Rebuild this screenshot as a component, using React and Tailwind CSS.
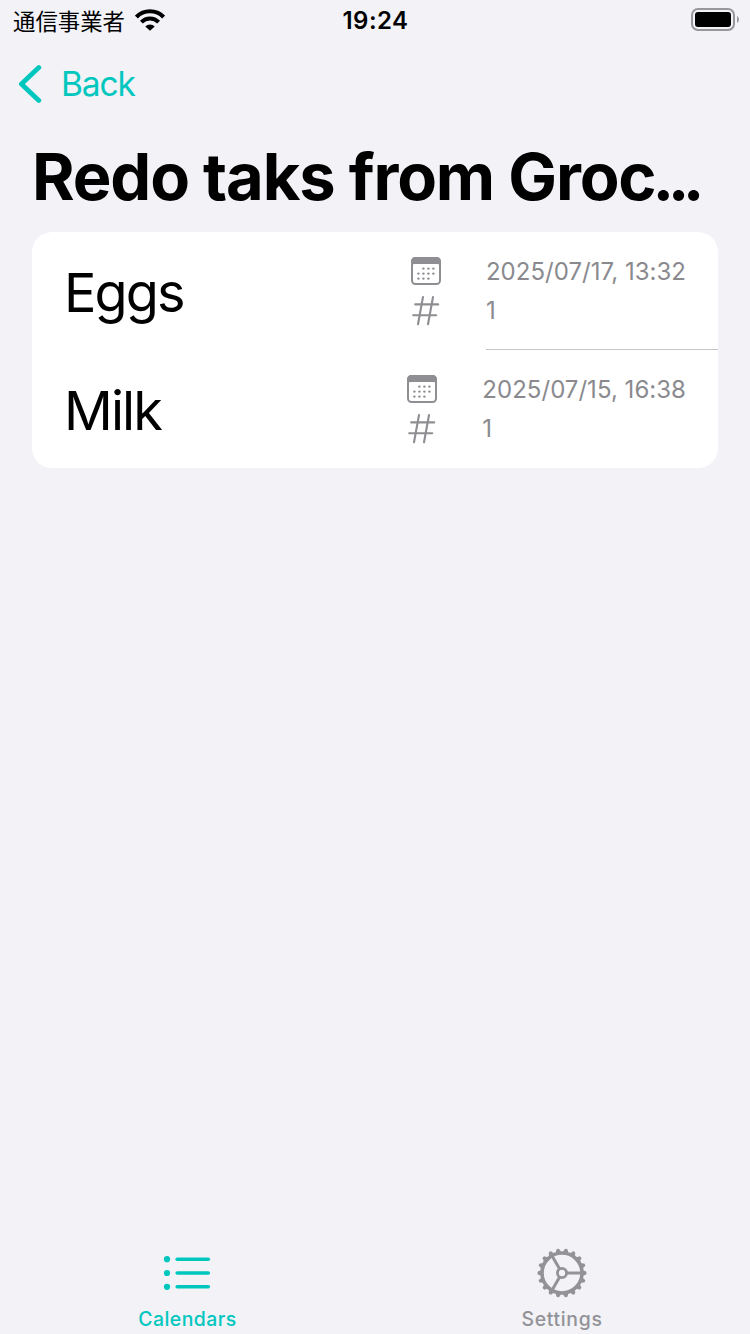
import { useState } from 'react'

const tasks = [
  { id: 1, name: 'Eggs', date: '2025/07/17, 13:32', count: 1 },
  { id: 2, name: 'Milk', date: '2025/07/15, 16:38', count: 1 },
]

const calendarDots = [
  [12.4, 11.6], [17.4, 11.6], [22.4, 11.6],
  [7.4, 16.6], [12.4, 16.6], [17.4, 16.6], [22.4, 16.6],
  [7.4, 21.6], [12.4, 21.6], [17.4, 21.6],
]

const gearTeeth = Array.from({ length: 18 }, (_, i) => i * 20)

function WifiIcon() {
  return (
    <svg width="30" height="22" viewBox="0 0 30 22" fill="none" stroke="black">
      <path d="M1.4 8A19 19 0 0 1 28.6 8" strokeWidth="4.2" />
      <path d="M6.4 13.2A12 12 0 0 1 23.6 13.2" strokeWidth="4" />
      <path d="M15 21.8L10.3 17.4A6.6 6.6 0 0 1 19.7 17.4Z" fill="black" stroke="none" />
    </svg>
  )
}

function BatteryIcon() {
  return (
    <svg width="49" height="23" viewBox="0 0 49 23" fill="none">
      <rect x="1" y="1" width="42" height="21" rx="6" stroke="#98989b" strokeWidth="2" />
      <rect x="4" y="4" width="36" height="15" rx="3" fill="black" />
      <path d="M46 8C48.6 9.5 48.6 13.5 46 15Z" fill="#98989b" />
    </svg>
  )
}

function CalendarIcon() {
  return (
    <svg width="30" height="28" viewBox="0 0 30 28" fill="none">
      <rect x="1" y="1" width="28" height="26" rx="3.5" stroke="#8e8e93" strokeWidth="2" />
      <path d="M0 8V4.5A4.5 4.5 0 0 1 4.5 0H25.5A4.5 4.5 0 0 1 30 4.5V8H28.5Q28 7 26.5 7H3.5Q2 7 1.5 8Z" fill="#8e8e93" />
      {calendarDots.map(([x, y]) => (
        <circle key={`${x}-${y}`} cx={x} cy={y} r="1.2" fill="#8e8e93" />
      ))}
    </svg>
  )
}

function NumberIcon() {
  return (
    <svg width="30" height="32" viewBox="0 0 30 32" fill="none" stroke="#8e8e93" strokeWidth="2.1" strokeLinecap="round">
      <path d="M4.2 10.4H27.2M2.2 21.3H25.2M12 3L7 30.2M22 3L17 30.2" />
    </svg>
  )
}

function ListIcon() {
  return (
    <svg width="48" height="36" viewBox="0 0 48 36" fill="currentColor" stroke="currentColor">
      {[4.2, 18, 31.8].map(y => (
        <g key={y}>
          <circle cx="4" cy={y} r="3.1" stroke="none" />
          <path d={`M14.2 ${y}H45.3`} strokeWidth="3.6" strokeLinecap="round" />
        </g>
      ))}
    </svg>
  )
}

function GearIcon() {
  return (
    <svg width="50" height="50" viewBox="-25 -25 50 50" fill="none" stroke="currentColor">
      <circle r="20" strokeWidth="3.6" />
      <circle r="4.6" strokeWidth="2.8" />
      {[0, 120, 240].map(a => (
        <path key={a} d="M5 0H20" strokeWidth="3" transform={`rotate(${a})`} />
      ))}
      {gearTeeth.map(a => (
        <path
          key={a}
          d="M21 -2.7L24.2 -1.4Q25 0 24.2 1.4L21 2.7Z"
          fill="currentColor"
          stroke="none"
          transform={`rotate(${a})`}
        />
      ))}
    </svg>
  )
}

function TaskRow({ task, last }) {
  return (
    <li className="flex h-[118px] pl-8">
      <div className="flex flex-1 items-center pt-[2px] text-[54px] tracking-[-1.9px]">{task.name}</div>
      <div className="flex w-[30px] flex-col items-center pt-[25px]">
        <CalendarIcon />
        <div className="mt-[9px]">
          <NumberIcon />
        </div>
      </div>
      <div className={`ml-[45px] flex flex-col pt-[20px] pr-8 text-[24px] leading-[39px] tracking-[0.03px] whitespace-nowrap text-[#8a8a8e] ${last ? '' : 'border-b border-[#c6c6c8]'}`}>
        <span>{task.date}</span>
        <span>{task.count}</span>
      </div>
    </li>
  )
}

export default function App() {
  const [tab, setTab] = useState('calendars')

  return (
    <div className="flex h-[1334px] w-[750px] flex-col overflow-hidden bg-[#f2f2f7] font-['Inter','Noto_Sans_CJK_JP',sans-serif] text-black">
      {/* status bar */}
      <div className="grid h-10 grid-cols-3 items-center pr-[10px] pl-[13px]">
        <div className="flex items-center gap-[10px]">
          <span className="font-['Noto_Sans_CJK_JP',sans-serif] text-[22.4px] leading-[38px] whitespace-nowrap">通信事業者</span>
          <WifiIcon />
        </div>
        <div className="pt-px pr-[2px] text-center text-[24px] font-semibold tracking-[0.5px]">19:24</div>
        <div className="flex justify-end pb-px">
          <BatteryIcon />
        </div>
      </div>

      <nav className="flex h-[88px] items-center pl-[18px]">
        <button className="flex items-center gap-[19px] text-[33.5px] tracking-[-1.1px] text-[#00c7be]">
          <svg width="24" height="38" viewBox="0 0 24 38" fill="none" stroke="currentColor" strokeWidth="4.8" strokeLinecap="round" strokeLinejoin="round">
            <path d="M20.8 2.6L3.4 19L20.8 35.4" />
          </svg>
          <span className="pt-px">Back</span>
        </button>
      </nav>

      <h1 className="h-[104px] pt-[8px] pl-8 text-[65px] leading-[82px] font-bold tracking-[-1.15px] whitespace-nowrap">
        Redo taks from Groc<span className="-ml-[3px] tracking-[-6.5px]">...</span>
      </h1>

      <ul className="mr-8 ml-8 overflow-hidden rounded-[20px] bg-white">
        {tasks.map((task, i) => (
          <TaskRow key={task.id} task={task} last={i === tasks.length - 1} />
        ))}
      </ul>

      {/* tab bar */}
      <div className="mt-auto grid h-[98px] grid-cols-2 text-[19.4px] font-medium tracking-[0.5px]">
        <button
          onClick={() => setTab('calendars')}
          className={`flex flex-col items-center pr-px ${tab === 'calendars' ? 'text-[#00c7be]' : 'text-[#929297]'}`}
        >
          <span className="flex h-[74px] items-center"><ListIcon /></span>
          <span className="pl-px leading-[18px]">Calendars</span>
        </button>
        <button
          onClick={() => setTab('settings')}
          className={`flex flex-col items-center pr-px ${tab === 'settings' ? 'text-[#00c7be]' : 'text-[#929297]'}`}
        >
          <span className="flex h-[74px] items-center"><GearIcon /></span>
          <span className="leading-[18px] tracking-[0.7px]">Settings</span>
        </button>
      </div>
    </div>
  )
}
